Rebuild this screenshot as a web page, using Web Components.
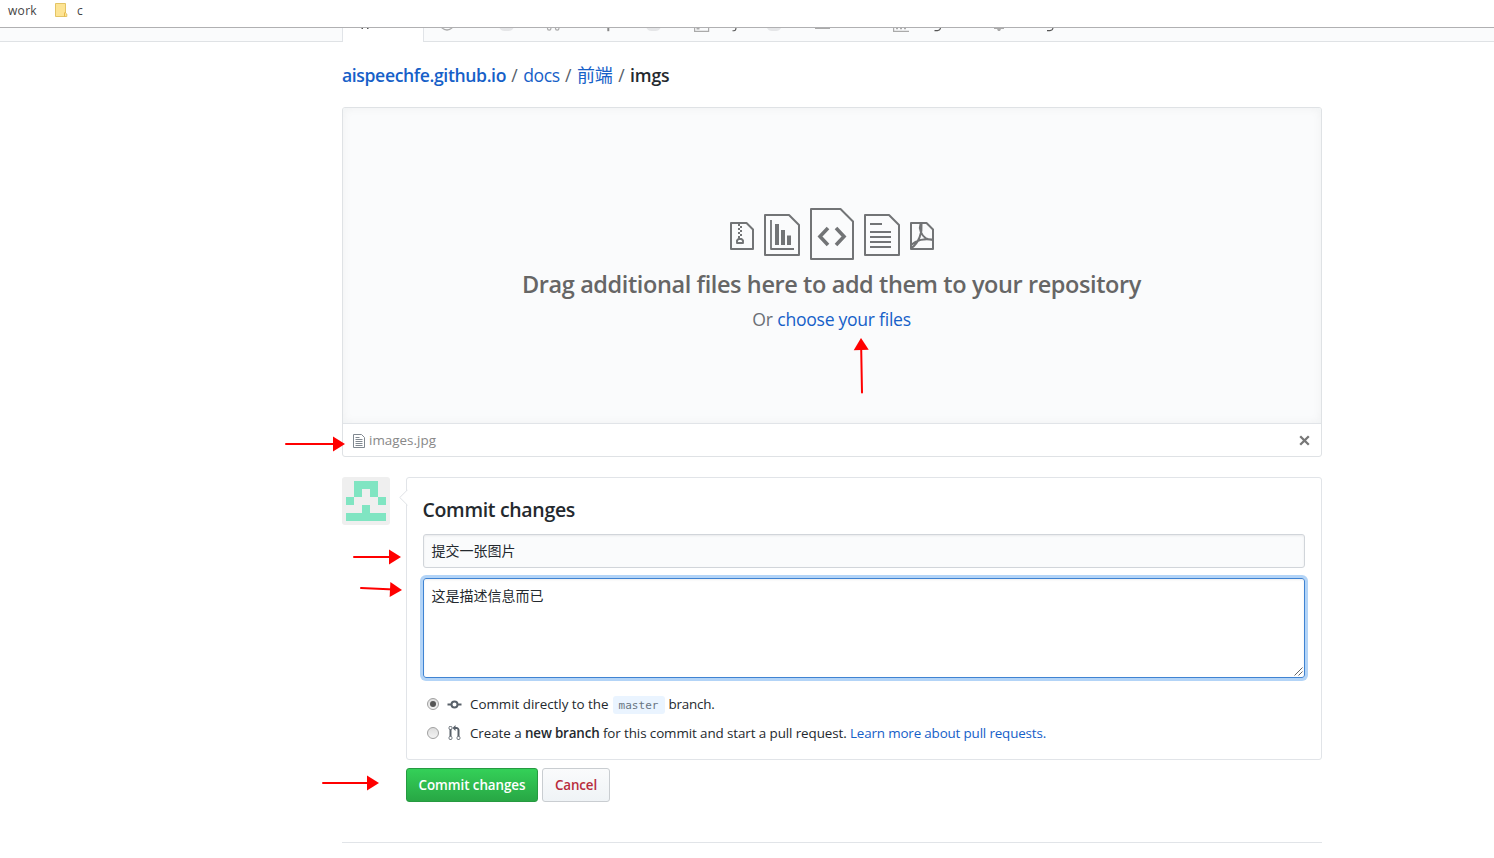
<!DOCTYPE html>
<html lang="en">
<head>
<meta charset="utf-8">
<title>Upload files</title>
<style>
html,body{margin:0;height:100%;overflow:hidden;background:#fff}
body{font-family:"Open Sans","Noto Sans","Noto Sans CJK SC",sans-serif;color:#24292e;font-size:14px}
</style>
</head>
<body>
<upload-page></upload-page>
<script>
function define(name, html, setup) {
  const t = document.createElement('template');
  t.innerHTML = html;
  customElements.define(name, class extends HTMLElement {
    constructor() { super(); this.attachShadow({mode:'open'}).append(t.content.cloneNode(true)); }
    connectedCallback() { if (setup) setup(this); }
  });
}

/* Text run tracked to a fixed advance width. */
define('text-run', `<style>:host{display:inline-block;white-space:pre}</style><slot></slot>`, el => {
  const w = +el.getAttribute('w');
  el.style.letterSpacing = '0px';
  const n = el.textContent.length, now = el.getBoundingClientRect().width;
  el.style.letterSpacing = ((w - now) / n) + 'px';
  el.style.width = w + 'px';
});

define('bookmark-bar', `<style>
:host{display:flex;align-items:flex-start;border-bottom:1px solid #b0b0b2;font-size:12px;color:#444;line-height:16px;padding:3px 0 0 8px;box-sizing:content-box;height:24px}
svg{margin:0 9px 0 18px;flex:none}
</style><text-run w="29">work</text-run>
<svg width="13" height="15" viewBox="0 0 13 15"><path d="M.5.5h10v9.500l1.300 1v2.500H.5z" fill="#fde494" stroke="#e3c465"/><path d="M9.500 13.500v-3.500l1-1" fill="none" stroke="#e9b949"/></svg>
<text-run w="6">c</text-run>`);

define('repo-nav', `<style>
:host{display:flex;height:14px}
i{display:block;box-sizing:border-box;height:14px;background:#fafbfc;border-bottom:1px solid #dfe2e5}
.l{width:343px;border-right:1px solid #e1e4e8}
.t{width:80px;background:#fff;border:0}
.r{flex:1;border-left:1px solid #e1e4e8}
svg{display:block}
</style><i class="l"></i><i class="t"><svg width="80" height="14"><path d="M18.500 0h1.500v1h-1.500zM24 0h1.500v1H24z" fill="#555"/></svg></i><i class="r"><svg width="700" height="13" viewBox="424 28 700 13">
<g fill="none" stroke="#aaa" stroke-width="1.200"><path d="M441.500 27.500q5.500 5 11 0M547.500 27v1.500a1.700 1.700 0 0 0 3.400 0V27M555.500 27v1.500a1.700 1.700 0 0 0 3.400 0V27M694.600 27v4.400h14V27M893.600 27v4.400H909"/></g>
<g fill="#e5e6e8"><path d="M499.500 28h14q-1.500 3-5 3h-4q-3.500 0-5-3M646.500 28h14q-1.500 3-5 3h-4q-3.500 0-5-3M767 28h14q-1.500 3-5 3h-4q-3.500 0-5-3"/></g>
<path d="M607.300 28h2v3.200h-2z" fill="#888"/><path d="M696.500 28h3v1.500h-3zM815 28h15v1h-15zM896 28h2v1.300h-2zM900 28h2v1.300h-2zM904 28h2v1.300h-2zM994 28h10v1h-3l-1 2h-2l-1-2h-3z" fill="#aaa"/>
<path d="M732.500 30.800h1.500q1.800 0 2-2.800M934.500 30.600h3q2.600 0 3-2.600M1047 30.600h3q2.600 0 3-2.600" fill="none" stroke="#555" stroke-width="1.100"/></svg></i>`);

define('path-crumbs', `<style>
:host{display:flex;font-size:17.600px;line-height:26px;height:27px;padding-top:20px;color:#1660c8}
b{font-weight:600} .s{color:#586069} .e{font-weight:600;color:#24292e}
.s{width:17.200px;text-align:center}
</style><b><text-run w="164">aispeechfe.github.io</text-run></b><span class="s">/</span><text-run w="36.500">docs</text-run><span class="s">/</span><text-run w="36" style="font-size:18px">前端</text-run><span class="s">/</span><span class="e"><text-run w="39.500">imgs</text-run></span>`);

define('file-icons', `<style>:host{display:block;height:52px}svg{display:block;margin:auto}</style>
<svg width="206" height="52" viewBox="729 208 206 52" fill="none" stroke="#727476" stroke-width="2" stroke-linejoin="round">
<path d="M731 223h15.500l6.500 6.500V249H731zM765 215h24l10 10v30h-34zM811 209h29.500l12.500 12.500V259H811zM865 215h24l10 10v30h-34zM911 223h15.500l6.500 6.500V249h-22z"/>
<path d="M771 220v29h23" stroke-width="1.800"/><path d="M777 224v21M783 230v15M789 235.500V245" stroke-width="4" stroke-linejoin="miter"/>
<path d="M828 228l-8 8.500 8 8.500M836 228l8 8.500-8 8.500" stroke-width="3.600" stroke-linejoin="miter"/>
<path d="M870 224h12M870 232h21M870 237h21M870 242h21M870 247h21"/>
<path d="M738 224h2v2h-2zM740 226h2v2h-2zM738 228h2v2h-2zM740 230h2v2h-2zM738 232h2v2h-2zM740 234h2v2h-2zM738 236h2v2h-2z" fill="#727476" stroke="none"/>
<path d="M737 243v-2.500l1.500-1.500h3l1.500 1.500v2.500z" stroke-width="1.900"/>
<path d="M920.500 224c-2 5 1 11 5 14 3 2 6 1.500 8 1.500M921.500 224c1 9-3 19-10 24M911 245c5-5 14-7 22-5" stroke-width="2"/>
</svg>`);

define('drop-zone', `<style>
:host{display:block;box-sizing:border-box;height:350px;margin-top:18px;border:1px solid #dfe2e5;border-radius:3px;overflow:hidden}
.z{background:#fafbfc;box-shadow:inset 0 0 10px rgba(27,31,35,.05);border-bottom:1px solid #e1e4e8;text-align:center;box-sizing:content-box;padding-top:100px;height:215px}
.h{font-size:23.500px;font-weight:600;line-height:34px;color:#666;margin-top:7px}
.o{font-size:17.600px;line-height:26px;color:#6a6f75;margin-top:5px;display:flex;justify-content:center}
.h,.o{position:relative;left:-.5px}
.a{color:#1660c8}
.f{display:flex;align-items:center;height:33px;padding:0 11px 0 9.500px;color:#888;font-size:13.400px}
.f text-run{margin:-2px 0 0 4.500px;flex:none}.x{margin-left:auto}
</style><div class="z"><file-icons></file-icons><div class="h"><text-run w="619">Drag additional files here to add them to your repository</text-run></div>
<div class="o"><text-run w="25">Or </text-run><text-run class="a" w="133.500">choose your files</text-run></div></div>
<div class="f"><svg width="12" height="14" fill="none" stroke="#808890"><path d="M.5.5h8l3 3v10H.5zM2.500 3.500h4M2.500 5.500h7M2.500 7.500h7M2.500 9.500h7M2.500 11.500h7"/></svg><text-run w="67">images.jpg</text-run>
<svg class="x" width="11" height="11" viewBox="0 0 11 11"><path d="M1.200 1.200l8.600 8.600M9.800 1.200L1.200 9.800" stroke="#777" stroke-width="2.300"/></svg></div>`);

define('user-avatar', `<style>:host{display:block;width:48px;height:48px;border-radius:3px;overflow:hidden;flex:none}svg{display:block}</style>
<svg width="48" height="48"><path fill="#efefef" d="M0 0h48v48H0z"/><path fill="#80e5c2" d="M12 4h24v16H28v-8h-8v8h-8zM4 20h8v8H4zM36 20h8v8h-8zM20 28h8v8h16v8H4v-8h16z"/></svg>`);

define('radio-row', `<style>
:host{display:flex;align-items:center;height:20px;font-size:13.400px;line-height:20px}
i{box-sizing:border-box;width:12px;height:12px;border-radius:50%;border:1px solid #a0a0a0;background:linear-gradient(#ddd,#f3f3f3);display:grid;place-items:center;margin:0 8px 0 4px;flex:none}
:host([checked]) i:after{content:"";width:6px;height:6px;border-radius:50%;background:#555}
</style><i></i><slot name="icon"></slot><slot></slot>`);

define('commit-form', `<style>
:host{position:relative;display:block;box-sizing:border-box;width:916px;height:283px;border:1px solid #e1e4e8;border-radius:3px;padding:17px 16px 0 16px}
.n{position:absolute;left:-8px;top:11px;display:block}
.h{font-size:19.500px;font-weight:600;line-height:30px;height:30px;margin-left:-.5px}
.i,.t{box-sizing:border-box;border-radius:3px;padding:0 7.500px;font-size:14px}
.i{margin-top:9px;height:34px;line-height:32px;border:1px solid #d1d5da;background:#fafbfc;box-shadow:inset 0 1px 2px rgba(27,31,35,.075)}
.t{position:relative;margin-top:10px;height:100px;padding-top:6px;line-height:21px;border:1px solid #3f83d2;box-shadow:inset 0 1px 2px rgba(27,31,35,.075),0 0 0 3px #b3d4f7}
.t svg{position:absolute;right:1px;bottom:1px}
radio-row{margin-top:16px}radio-row+radio-row{margin-top:9px}
.ic{width:15px;height:16px;margin-right:8px;flex:none}
code{font:11px/18px "DejaVu Sans Mono",monospace;background:#eaf4ff;color:#687583;border-radius:3px;padding:1px 6px 0;height:17px;margin:1px 4px 0}
b{font-weight:600}.a{color:#1660c8}
</style>
<svg class="n" width="9" height="17"><path d="M8.500.8L.8 8.500l7.700 7.700" fill="#fff" stroke="#dfe2e5"/></svg>
<div class="h"><text-run w="152.500">Commit changes</text-run></div>
<div class="i">提交一张图片</div>
<div class="t">这是描述信息而已<svg width="9" height="9"><path d="M.5 8.500l8-8M4.500 8.500l4-4" stroke="#666" stroke-width="1"/></svg></div>
<radio-row checked><svg slot="icon" class="ic" viewBox="0 0 15 16" fill="none" stroke="#586069" stroke-width="2"><circle cx="7.500" cy="8.500" r="3"/><path d="M.5 8.500h4M10.500 8.500h4"/></svg><text-run w="138.500">Commit directly to the</text-run><code><text-run w="40">master</text-run></code><text-run w="46">branch.</text-run></radio-row>
<radio-row><svg slot="icon" class="ic" viewBox="-1 0 14 16" fill="#586069"><path fill-rule="evenodd" d="M11 11.280V5c-.03-.78-.34-1.470-.94-2.060C9.460 2.350 8.780 2.030 8 2H7V0L4 3l3 3V4h1c.27.020.48.110.69.310.21.200.3.420.31.690v6.280A1.993 1.993 0 0 0 10 15a1.993 1.993 0 0 0 1-3.720zm-1 2.920c-.66 0-1.200-.55-1.200-1.200 0-.65.55-1.200 1.200-1.200.65 0 1.200.55 1.200 1.200 0 .65-.55 1.200-1.200 1.200zM4 3c0-1.110-.89-2-2-2a1.993 1.993 0 0 0-1 3.720v6.560A1.993 1.993 0 0 0 2 15a1.993 1.993 0 0 0 1-3.720V4.720c.59-.34 1-.98 1-1.720zm-.8 10c0 .66-.55 1.200-1.200 1.200-.65 0-1.200-.55-1.200-1.200 0-.65.55-1.200 1.200-1.200.65 0 1.200.55 1.200 1.200zM2 4.200C1.340 4.200.8 3.650.8 3c0-.65.55-1.200 1.200-1.200.65 0 1.200.55 1.200 1.200 0 .65-.55 1.200-1.200 1.200z"/></svg><text-run w="55">Create a </text-run><b><text-run w="74.500">new branch</text-run></b><text-run w="250.500"> for this commit and start a pull request. </text-run><text-run class="a" w="196">Learn more about pull requests.</text-run></radio-row>`);

define('push-button', `<style>
:host{display:flex;align-items:center;justify-content:center;box-sizing:border-box;width:68px;height:34px;border:1px solid #c9cdd1;border-radius:3px;font-size:13.400px;font-weight:600;color:#b92c3c;background:linear-gradient(#fafbfc,#eff3f6)}
:host([primary]){width:132px;color:#fff;border-color:#269a41;background:linear-gradient(#34d058,#28a745)}
</style><slot></slot>`);

define('red-arrow', `<style>:host{position:absolute;display:block;pointer-events:none}svg{display:block;overflow:visible}</style><svg width="1" height="1"><path class="s" stroke="#f00" stroke-width="2" stroke-linecap="round"/><path class="h" fill="#f00" d="M0 0l-12-7.500v15z"/></svg>`, el => {
  const [x1,y1,x2,y2] = el.getAttribute('line').split(' ').map(Number);
  el.style.left = x2 + 'px'; el.style.top = y2 + 'px';
  const dx = x1-x2, dy = y1-y2, L = Math.hypot(dx,dy);
  el.shadowRoot.querySelector('.s').setAttribute('d', 'M'+dx+' '+dy+'L'+dx/L*8+' '+dy/L*8);
  el.shadowRoot.querySelector('.h').setAttribute('transform','rotate('+Math.atan2(-dy,-dx)*180/Math.PI+')');
});

define('upload-page', `<style>
:host{display:block;position:relative;width:1494px;height:858px;overflow:hidden;background:#fff}
main{width:980px;margin-left:342px}
.c{display:flex;justify-content:space-between;margin-top:20px}
.b{display:flex;gap:4px;margin:8px 0 0 64px;padding-bottom:40px}
hr{margin:0;border:0;border-top:1px solid #e1e4e8}
</style><bookmark-bar></bookmark-bar><repo-nav></repo-nav>
<main><path-crumbs></path-crumbs><drop-zone></drop-zone>
<div class="c"><user-avatar></user-avatar><commit-form></commit-form></div>
<div class="b"><push-button primary><text-run w="107">Commit changes</text-run></push-button><push-button><text-run w="42">Cancel</text-run></push-button></div><hr></main>
<red-arrow line="861.500 392.500 860.500 338"></red-arrow><red-arrow line="285.500 443.500 344.500 443.500"></red-arrow><red-arrow line="353.500 556.500 400.500 556.500"></red-arrow><red-arrow line="360.500 587.500 401.500 589.500"></red-arrow><red-arrow line="322.500 782.500 378.500 782.500"></red-arrow>`);
</script>
</body>
</html>
